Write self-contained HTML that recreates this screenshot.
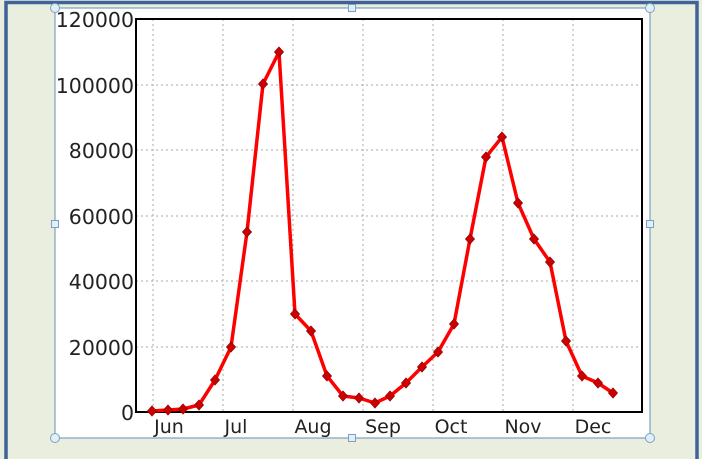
<!DOCTYPE html>
<html><head><style>
html,body{margin:0;padding:0;background:#e9eedf;}
</style></head><body>
<svg width="702" height="459" xmlns="http://www.w3.org/2000/svg" style="display:block">
<rect x="0" y="0" width="702" height="459" fill="#e9eedf"/>
<path d="M6 459 V2.5 H697 V459" fill="none" stroke="#3f6399" stroke-width="3.5"/>
<rect x="55" y="8" width="595" height="430" fill="#fff" stroke="#7f9fc0" stroke-width="1.2"/>
<g stroke="#aaa" stroke-width="1" stroke-dasharray="2,3">
<line x1="153" y1="19" x2="153" y2="412"/><line x1="223" y1="19" x2="223" y2="412"/><line x1="293" y1="19" x2="293" y2="412"/><line x1="363" y1="19" x2="363" y2="412"/><line x1="433" y1="19" x2="433" y2="412"/><line x1="503" y1="19" x2="503" y2="412"/><line x1="573" y1="19" x2="573" y2="412"/>
<line x1="136" y1="85" x2="642" y2="85"/><line x1="136" y1="150" x2="642" y2="150"/><line x1="136" y1="216" x2="642" y2="216"/><line x1="136" y1="281" x2="642" y2="281"/><line x1="136" y1="347" x2="642" y2="347"/>
</g>
<rect x="136" y="19" width="506" height="393" fill="none" stroke="#000" stroke-width="2"/>
<g font-family="DejaVu Sans, sans-serif" font-size="20.5" fill="#222" text-anchor="end" textLength="75">
<text x="134" y="27">120000</text><text x="134" y="93">100000</text><text x="134" y="158">80000</text><text x="134" y="224">60000</text><text x="134" y="289">40000</text><text x="134" y="355">20000</text><text x="134" y="420">0</text>
</g>
<g font-family="DejaVu Sans, sans-serif" font-size="19" fill="#222" text-anchor="middle">
<text x="169" y="433">Jun</text><text x="236" y="433">Jul</text><text x="313" y="433">Aug</text><text x="383" y="433">Sep</text><text x="451" y="433">Oct</text><text x="523" y="433">Nov</text><text x="593" y="433">Dec</text>
</g>
<polyline fill="none" stroke="#ff0000" stroke-width="3.5" stroke-linejoin="round" points="152,411 168,410 183,409 199,405 215,380 231,347 247,232 263,84 279,52 295,314 311,331 327,376 343,396 359,398 375,403 390,396 406,383 422,367 438,352 454,324 470,239 486,157 502,137 518,203 534,239 550,262 566,341 582,376 598,383 613,393"/>
<g fill="#cc0000" stroke="#990000" stroke-width="0.8">
<path d="M0 -5 L4.5 0 L0 5 L-4.5 0Z" transform="translate(152,411)"/>
<path d="M0 -5 L4.5 0 L0 5 L-4.5 0Z" transform="translate(168,410)"/><path d="M0 -5 L4.5 0 L0 5 L-4.5 0Z" transform="translate(183,409)"/><path d="M0 -5 L4.5 0 L0 5 L-4.5 0Z" transform="translate(199,405)"/><path d="M0 -5 L4.5 0 L0 5 L-4.5 0Z" transform="translate(215,380)"/><path d="M0 -5 L4.5 0 L0 5 L-4.5 0Z" transform="translate(231,347)"/><path d="M0 -5 L4.5 0 L0 5 L-4.5 0Z" transform="translate(247,232)"/><path d="M0 -5 L4.5 0 L0 5 L-4.5 0Z" transform="translate(263,84)"/><path d="M0 -5 L4.5 0 L0 5 L-4.5 0Z" transform="translate(279,52)"/><path d="M0 -5 L4.5 0 L0 5 L-4.5 0Z" transform="translate(295,314)"/><path d="M0 -5 L4.5 0 L0 5 L-4.5 0Z" transform="translate(311,331)"/><path d="M0 -5 L4.5 0 L0 5 L-4.5 0Z" transform="translate(327,376)"/><path d="M0 -5 L4.5 0 L0 5 L-4.5 0Z" transform="translate(343,396)"/><path d="M0 -5 L4.5 0 L0 5 L-4.5 0Z" transform="translate(359,398)"/><path d="M0 -5 L4.5 0 L0 5 L-4.5 0Z" transform="translate(375,403)"/><path d="M0 -5 L4.5 0 L0 5 L-4.5 0Z" transform="translate(390,396)"/><path d="M0 -5 L4.5 0 L0 5 L-4.5 0Z" transform="translate(406,383)"/><path d="M0 -5 L4.5 0 L0 5 L-4.5 0Z" transform="translate(422,367)"/><path d="M0 -5 L4.5 0 L0 5 L-4.5 0Z" transform="translate(438,352)"/><path d="M0 -5 L4.5 0 L0 5 L-4.5 0Z" transform="translate(454,324)"/><path d="M0 -5 L4.5 0 L0 5 L-4.5 0Z" transform="translate(470,239)"/><path d="M0 -5 L4.5 0 L0 5 L-4.5 0Z" transform="translate(486,157)"/><path d="M0 -5 L4.5 0 L0 5 L-4.5 0Z" transform="translate(502,137)"/><path d="M0 -5 L4.5 0 L0 5 L-4.5 0Z" transform="translate(518,203)"/><path d="M0 -5 L4.5 0 L0 5 L-4.5 0Z" transform="translate(534,239)"/><path d="M0 -5 L4.5 0 L0 5 L-4.5 0Z" transform="translate(550,262)"/><path d="M0 -5 L4.5 0 L0 5 L-4.5 0Z" transform="translate(566,341)"/><path d="M0 -5 L4.5 0 L0 5 L-4.5 0Z" transform="translate(582,376)"/><path d="M0 -5 L4.5 0 L0 5 L-4.5 0Z" transform="translate(598,383)"/><path d="M0 -5 L4.5 0 L0 5 L-4.5 0Z" transform="translate(613,393)"/>
</g>
<g fill="#dff0f8" stroke="#7f9fc0" stroke-width="1">
<circle cx="55" cy="8" r="4.5"/><circle cx="650" cy="8" r="4.5"/><circle cx="55" cy="438" r="4.5"/><circle cx="650" cy="438" r="4.5"/>
<rect x="348.5" y="4.5" width="7" height="7"/><rect x="348.5" y="434.5" width="7" height="7"/><rect x="51.5" y="220.5" width="7" height="7"/><rect x="646.5" y="220.5" width="7" height="7"/>
</g>
</svg>
</body></html>
